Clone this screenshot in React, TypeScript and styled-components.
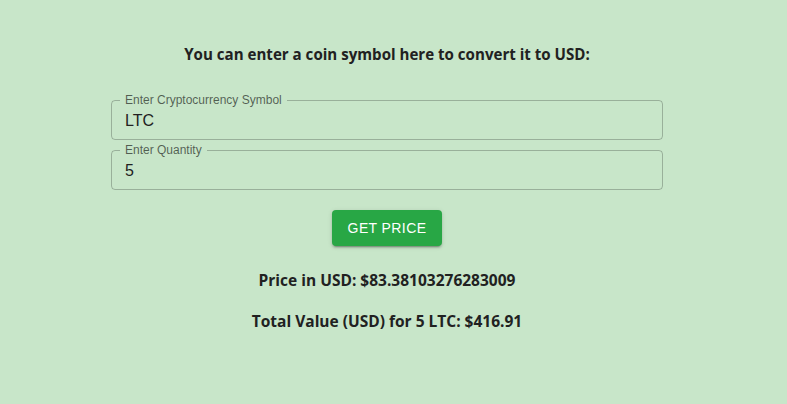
import React from "react";
import styled, { createGlobalStyle } from "styled-components";

const Global = createGlobalStyle`
  html, body { margin: 0; padding: 0; background: #c8e6c9; }
  body { font-family: "Open Sans", "Noto Sans", sans-serif; color: #212121; }
  * { box-sizing: border-box; }
`;

const Page = styled.div`
  min-height: 404px;
  padding: 0 13px 0 0;
  background: #c8e6c9;
`;

const Container = styled.div`
  width: 552px;
  margin: 0 auto;
  padding-top: 43px;
  display: flex;
  flex-direction: column;
  align-items: stretch;
`;

const Heading = styled.h3`
  margin: 0 0 35px;
  text-align: center;
  font-family: "Open Sans", sans-serif;
  font-weight: 700;
  font-size: 15.1px;
  line-height: 22px;
  color: #212121;
`;

const Fields = styled.div`
  display: flex;
  flex-direction: column;
  gap: 10px;
`;

const Field = styled.div`
  position: relative;
  height: 40px;
`;

const Input = styled.input`
  display: block;
  width: 100%;
  height: 40px;
  padding: 9px 14px 8px;
  border: none;
  outline: none;
  background: transparent;
  font-family: "Liberation Sans", Arial, sans-serif;
  font-size: 16px;
  line-height: 23px;
  color: #212121;
`;

const Outline = styled.fieldset`
  position: absolute;
  inset: -5px 0 0 0;
  margin: 0;
  padding: 0 8px;
  border: 1px solid rgba(0, 0, 0, 0.23);
  border-radius: 4px;
  pointer-events: none;
`;

const Legend = styled.legend`
  padding: 0 5px;
  font-family: "Liberation Sans", Arial, sans-serif;
  font-size: 12px;
  line-height: 11px;
  color: rgba(0, 0, 0, 0.6);
  white-space: nowrap;
`;

const ButtonRow = styled.div`
  display: flex;
  justify-content: center;
  margin-top: 20px;
`;

const Button = styled.button`
  height: 36px;
  padding: 6px 16px;
  border: none;
  border-radius: 4px;
  background: #28a745;
  color: #fff;
  font-family: "Liberation Sans", Arial, sans-serif;
  font-size: 14px;
  letter-spacing: 0.4px;
  text-transform: uppercase;
  box-shadow: 0 3px 1px -2px rgba(0,0,0,0.2), 0 2px 2px 0 rgba(0,0,0,0.14), 0 1px 5px 0 rgba(0,0,0,0.12);
  cursor: pointer;
`;

const Result = styled.p<{ $top: number }>`
  margin: ${(p) => p.$top}px 0 0;
  text-align: center;
  font-family: "Open Sans", sans-serif;
  font-weight: 700;
  font-size: 15.5px;
  line-height: 22px;
  color: #212121;
`;

function TextField({ label, value }: { label: string; value: string }) {
  return (
    <Field>
      <Input defaultValue={value} />
      <Outline>
        <Legend>{label}</Legend>
      </Outline>
    </Field>
  );
}

export default function App() {
  return (
    <Page>
      <Global />
      <Container>
        <Heading>You can enter a coin symbol here to convert it to USD:</Heading>
        <Fields>
          <TextField label="Enter Cryptocurrency Symbol" value="LTC" />
          <TextField label="Enter Quantity" value="5" />
        </Fields>
        <ButtonRow>
          <Button>Get Price</Button>
        </ButtonRow>
        <Result $top={23}>Price in USD: $83.38103276283009</Result>
        <Result $top={19}>Total Value (USD) for 5 LTC: $416.91</Result>
      </Container>
    </Page>
  );
}
